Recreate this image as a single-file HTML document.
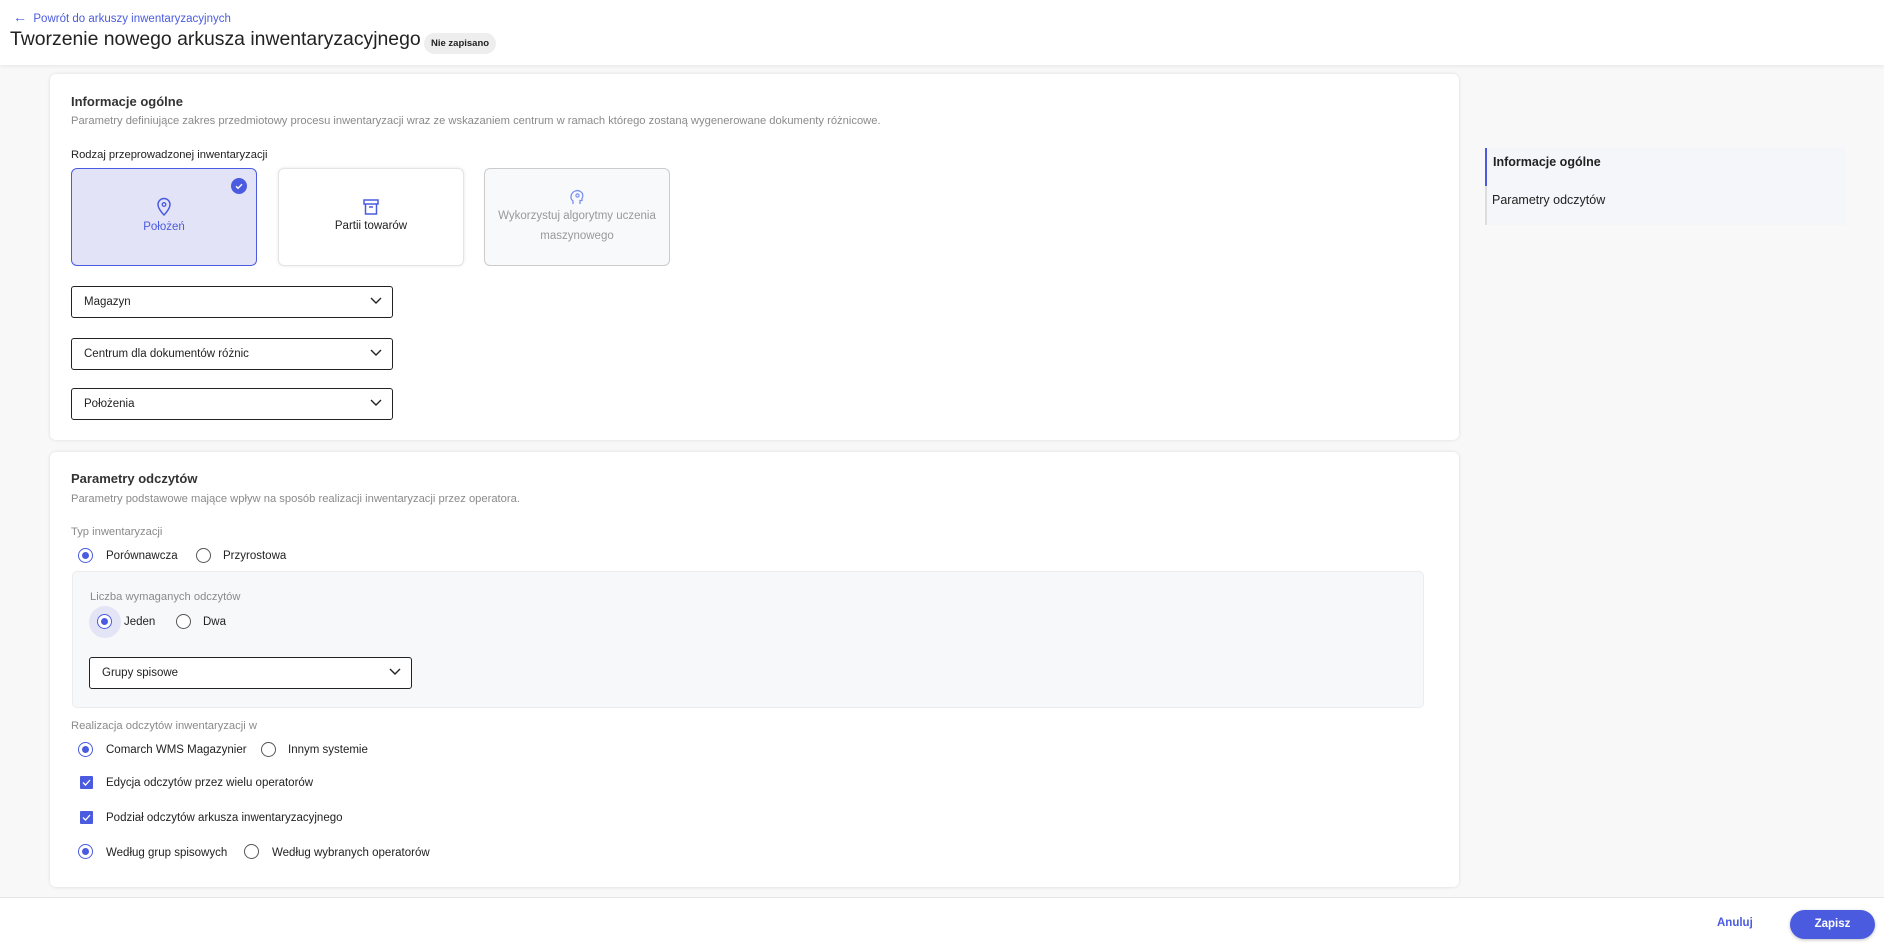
<!DOCTYPE html>
<html><head><meta charset="utf-8"><style>
*{box-sizing:border-box;margin:0;padding:0}
body{width:1884px;height:946px;background:#f8f8f8;font-family:"Liberation Sans",sans-serif;color:#222;position:relative;overflow:hidden}
.a{position:absolute;white-space:nowrap}
.hdr{position:absolute;left:0;top:0;width:1884px;height:65px;background:#fff;box-shadow:0 1px 4px rgba(0,0,0,.08)}
.card{position:absolute;left:50px;width:1409px;background:#fff;border-radius:6px;box-shadow:0 0 3px rgba(0,0,0,.12)}
.t{font-size:13px;font-weight:bold;color:#333}
.d{font-size:11.2px;color:#8a8a8a}
.sel{position:absolute;background:#fff;border:1px solid #222;border-radius:3px;font-size:11.5px;padding-left:12px;display:flex;align-items:center}
.sel svg{position:absolute;right:10px;top:50%;margin-top:-5px}
.r{position:absolute;width:15px;height:15px;border:1.5px solid #555;border-radius:50%;background:#fff}
.r.on{border-color:#4a5be0}
.r.on::after{content:"";position:absolute;left:2.5px;top:2.5px;width:7px;height:7px;border-radius:50%;background:#4a5be0}
.l{font-size:11.5px;color:#222;margin-top:1px}
.cb{position:absolute;width:13px;height:13px;background:#4a5be0;border-radius:1px}
.tile{position:absolute;top:168px;width:186px;height:98px;border-radius:6px;display:flex;flex-direction:column;align-items:center;justify-content:center;font-size:11.5px;text-align:center;line-height:20px}
</style></head><body>
<div class="hdr"></div>
<div class="a" style="left:13px;top:9px;font-size:11.5px;color:#4a5be0"><span style="font-size:14px">&#8592;</span>&nbsp; Powrót do arkuszy inwentaryzacyjnych</div>
<div class="a" style="left:10px;top:28px;font-size:19.4px;color:#222">Tworzenie nowego arkusza inwentaryzacyjnego</div>
<div class="a" style="left:424px;top:33px;height:21px;padding:0 7px;border-radius:11px;background:#eee;font-size:9.5px;font-weight:bold;line-height:21px">Nie zapisano</div>

<div class="card" style="top:74px;height:366px"></div>
<div class="a t" style="left:71px;top:94px">Informacje ogólne</div>
<div class="a d" style="left:71px;top:115px">Parametry definiujące zakres przedmiotowy procesu inwentaryzacji wraz ze wskazaniem centrum w ramach którego zostaną wygenerowane dokumenty różnicowe.</div>
<div class="a" style="left:71px;top:149px;font-size:11.2px">Rodzaj przeprowadzonej inwentaryzacji</div>
<div class="tile" style="left:71px;background:#e3e3f8;border:1px solid #4a5be0;color:#4a5be0">
<svg width="16" height="20" viewBox="0 0 16 20"><path d="M8 18s6-6 6-10.5A6 6 0 0 0 2 7.5C2 12 8 18 8 18z" fill="none" stroke="#4a5be0" stroke-width="1.5"/><circle cx="8" cy="7.5" r="1.8" fill="none" stroke="#4a5be0" stroke-width="1.3"/></svg>
<div>Położeń</div>
<div style="position:absolute;right:9px;top:9px;width:16px;height:16px;border-radius:50%;background:#4a5be0"><svg width="16" height="16"><path d="M5 8.2l2 2 4-4" fill="none" stroke="#fff" stroke-width="1.4"/></svg></div>
</div>
<div class="tile" style="left:278px;background:#fff;border:1px solid #e4e4e4;box-shadow:0 0 3px rgba(0,0,0,.1)">
<svg width="18" height="18" viewBox="0 0 18 18"><rect x="2" y="2" width="14" height="4" fill="none" stroke="#4a5be0" stroke-width="1.5"/><path d="M3.5 6v10h11V6" fill="none" stroke="#4a5be0" stroke-width="1.5"/><path d="M7 9h4" stroke="#4a5be0" stroke-width="1.5"/></svg>
<div>Partii towarów</div></div>
<div class="tile" style="left:484px;background:#f8f9fa;border:1px solid #ccc;color:#999">
<svg width="18" height="18" viewBox="0 0 18 18"><path d="M5 16v-3C3 11.5 2.5 9 3.5 6.5 5 3 9.5 1.5 12.5 3.5 15 5 15.5 8 14 10.5v2h-2V16" fill="none" stroke="#7b8ff0" stroke-width="1.3"/><circle cx="9.5" cy="7.5" r="1.6" fill="none" stroke="#7b8ff0" stroke-width="1.2"/></svg>
<div>Wykorzystuj algorytmy uczenia<br>maszynowego</div></div>

<div class="sel" style="left:71px;top:286px;width:322px;height:32px">Magazyn<svg width="12" height="8"><path d="M1 1l5 5 5-5" fill="none" stroke="#222" stroke-width="1.4"/></svg></div>
<div class="sel" style="left:71px;top:338px;width:322px;height:32px">Centrum dla dokumentów różnic<svg width="12" height="8"><path d="M1 1l5 5 5-5" fill="none" stroke="#222" stroke-width="1.4"/></svg></div>
<div class="sel" style="left:71px;top:388px;width:322px;height:32px">Położenia<svg width="12" height="8"><path d="M1 1l5 5 5-5" fill="none" stroke="#222" stroke-width="1.4"/></svg></div>

<div class="card" style="top:452px;height:435px"></div>
<div class="a t" style="left:71px;top:471px">Parametry odczytów</div>
<div class="a d" style="left:71px;top:493px">Parametry podstawowe mające wpływ na sposób realizacji inwentaryzacji przez operatora.</div>
<div class="a d" style="left:71px;top:526px">Typ inwentaryzacji</div>
<div class="r on" style="left:78px;top:548px"></div><div class="a l" style="left:106px;top:549px">Porównawcza</div>
<div class="r" style="left:196px;top:548px"></div><div class="a l" style="left:223px;top:549px">Przyrostowa</div>

<div style="position:absolute;left:72px;top:571px;width:1352px;height:137px;background:#f7f8fa;border:1px solid #ececec;border-radius:5px"></div>
<div class="a d" style="left:90px;top:591px">Liczba wymaganych odczytów</div>
<div style="position:absolute;left:89px;top:606px;width:32px;height:32px;border-radius:50%;background:#e3e5f6"></div>
<div class="r on" style="left:97px;top:614px"></div><div class="a l" style="left:124px;top:615px">Jeden</div>
<div class="r" style="left:176px;top:614px"></div><div class="a l" style="left:203px;top:615px">Dwa</div>
<div class="sel" style="left:89px;top:657px;width:323px;height:32px">Grupy spisowe<svg width="12" height="8"><path d="M1 1l5 5 5-5" fill="none" stroke="#222" stroke-width="1.4"/></svg></div>

<div class="a d" style="left:71px;top:720px">Realizacja odczytów inwentaryzacji w</div>
<div class="r on" style="left:78px;top:742px"></div><div class="a l" style="left:106px;top:743px">Comarch WMS Magazynier</div>
<div class="r" style="left:261px;top:742px"></div><div class="a l" style="left:288px;top:743px">Innym systemie</div>
<div class="cb" style="left:80px;top:776px"><svg width="13" height="13"><path d="M3 6.5l2.5 2.5 4.5-5" fill="none" stroke="#fff" stroke-width="1.3"/></svg></div><div class="a l" style="left:106px;top:776px">Edycja odczytów przez wielu operatorów</div>
<div class="cb" style="left:80px;top:811px"><svg width="13" height="13"><path d="M3 6.5l2.5 2.5 4.5-5" fill="none" stroke="#fff" stroke-width="1.3"/></svg></div><div class="a l" style="left:106px;top:811px">Podział odczytów arkusza inwentaryzacyjnego</div>
<div class="r on" style="left:78px;top:844px"></div><div class="a l" style="left:106px;top:846px">Według grup spisowych</div>
<div class="r" style="left:244px;top:844px"></div><div class="a l" style="left:272px;top:846px">Według wybranych operatorów</div>

<div style="position:absolute;left:1485px;top:148px;width:361px;height:77px;background:#f5f6fa;border-left:2px solid #ddd"></div>
<div style="position:absolute;left:1485px;top:148px;width:2px;height:38px;background:#4a5be0"></div>
<div class="a" style="left:1493px;top:155px;font-size:12.5px;font-weight:bold">Informacje ogólne</div>
<div class="a" style="left:1492px;top:193px;font-size:12.5px">Parametry odczytów</div>

<div style="position:absolute;left:0;top:897px;width:1884px;height:49px;background:#fff;border-top:1px solid #e6e6e6"></div>
<div class="a" style="left:1717px;top:917px;font-size:11.5px;font-weight:bold;color:#4a5be0">Anuluj</div>
<div class="a" style="left:1790px;top:910px;width:85px;height:29px;border-radius:15px;background:#4a5be0;color:#fff;font-size:11.5px;font-weight:bold;text-align:center;line-height:29px;box-shadow:0 1px 3px rgba(0,0,0,.25)">Zapisz</div>
</body></html>
